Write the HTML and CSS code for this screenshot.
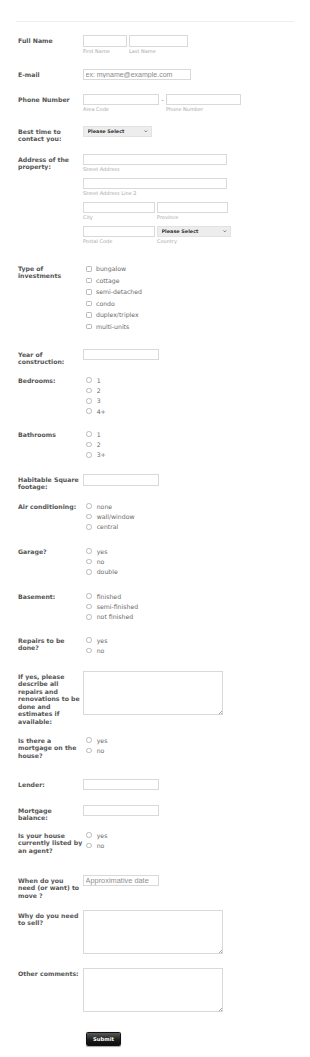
FILE: index.html
```html
<!DOCTYPE html>
<html lang="en">
<head>
<meta charset="utf-8">
<title>Property form</title>
<link rel="stylesheet" href="styles.css">
</head>
<body>
<div class="rule"></div>
<form class="form">
  <label class="lbl">Full Name</label>
  <div class="field pair">
    <div class="sub"><input class="in in-name w44" type="text"><span class="sl">First Name</span></div>
    <div class="sub"><input class="in in-name w59" type="text"><span class="sl">Last Name</span></div>
  </div>

  <label class="lbl">E-mail</label>
  <div class="field"><input class="in w108 ph-mail" type="email" placeholder="ex: myname@example.com"></div>

  <label class="lbl">Phone Number</label>
  <div class="field phone">
    <div class="sub"><input class="in w76" type="text"><span class="sl">Area Code</span></div>
    <span class="dash">-</span>
    <div class="sub"><input class="in w75" type="text"><span class="sl">Phone Number</span></div>
  </div>

  <label class="lbl">Best time to<br>contact you:</label>
  <div class="field">
    <span class="sel w69"><select><option>Please Select</option></select><svg class="chev" viewBox="0 0 6 4"><path d="M0.6 0.6 L3 3 L5.4 0.6" fill="none" stroke="#555" stroke-width="1.2"/></svg></span>
  </div>

  <label class="lbl">Address of the<br>property:</label>
  <div class="field addr">
    <div class="sub"><input class="in w144" type="text"><span class="sl">Street Address</span></div>
    <div class="sub"><input class="in w144" type="text"><span class="sl">Street Address Line 2</span></div>
    <div class="pair">
      <div class="sub"><input class="in w72" type="text"><span class="sl">City</span></div>
      <div class="sub"><input class="in w71" type="text"><span class="sl">Province</span></div>
    </div>
    <div class="pair">
      <div class="sub"><input class="in w72" type="text"><span class="sl">Postal Code</span></div>
      <div class="sub"><span class="sel w74"><select><option>Please Select</option></select><svg class="chev" viewBox="0 0 6 4"><path d="M0.6 0.6 L3 3 L5.4 0.6" fill="none" stroke="#555" stroke-width="1.2"/></svg></span><span class="sl">Country</span></div>
    </div>
  </div>

  <label class="lbl">Type of<br>investments</label>
  <div class="field opts chks">
    <label class="opt"><input type="checkbox">bungalow</label>
    <label class="opt"><input type="checkbox">cottage</label>
    <label class="opt"><input type="checkbox">semi-detached</label>
    <label class="opt"><input type="checkbox">condo</label>
    <label class="opt"><input type="checkbox">duplex/triplex</label>
    <label class="opt"><input type="checkbox">multi-units</label>
  </div>

  <label class="lbl">Year of<br>construction:</label>
  <div class="field"><input class="in w76" type="text"></div>

  <label class="lbl">Bedrooms:</label>
  <div class="field opts">
    <label class="opt"><input type="radio" name="bed">1</label>
    <label class="opt"><input type="radio" name="bed">2</label>
    <label class="opt"><input type="radio" name="bed">3</label>
    <label class="opt"><input type="radio" name="bed">4+</label>
  </div>

  <label class="lbl">Bathrooms</label>
  <div class="field opts">
    <label class="opt"><input type="radio" name="bath">1</label>
    <label class="opt"><input type="radio" name="bath">2</label>
    <label class="opt"><input type="radio" name="bath">3+</label>
  </div>

  <label class="lbl">Habitable Square<br>footage:</label>
  <div class="field"><input class="in w76 in-name" type="text"></div>

  <label class="lbl">Air conditioning:</label>
  <div class="field opts">
    <label class="opt"><input type="radio" name="air">none</label>
    <label class="opt"><input type="radio" name="air">wall/window</label>
    <label class="opt"><input type="radio" name="air">central</label>
  </div>

  <label class="lbl">Garage?</label>
  <div class="field opts">
    <label class="opt"><input type="radio" name="gar">yes</label>
    <label class="opt"><input type="radio" name="gar">no</label>
    <label class="opt"><input type="radio" name="gar">double</label>
  </div>

  <label class="lbl">Basement:</label>
  <div class="field opts">
    <label class="opt"><input type="radio" name="base">finished</label>
    <label class="opt"><input type="radio" name="base">semi-finished</label>
    <label class="opt"><input type="radio" name="base">not finished</label>
  </div>

  <label class="lbl">Repairs to be<br>done?</label>
  <div class="field opts">
    <label class="opt"><input type="radio" name="rep">yes</label>
    <label class="opt"><input type="radio" name="rep">no</label>
  </div>

  <label class="lbl">If yes, please<br>describe all<br>repairs and<br>renovations to be<br>done and<br>estimates if<br>available:</label>
  <div class="field"><span class="ta"><textarea></textarea></span></div>

  <label class="lbl">Is there a<br>mortgage on the<br>house?</label>
  <div class="field opts">
    <label class="opt"><input type="radio" name="mort">yes</label>
    <label class="opt"><input type="radio" name="mort">no</label>
  </div>

  <label class="lbl">Lender:</label>
  <div class="field"><input class="in w76" type="text"></div>

  <label class="lbl">Mortgage<br>balance:</label>
  <div class="field"><input class="in w76" type="text"></div>

  <label class="lbl">Is your house<br>currently listed by<br>an agent?</label>
  <div class="field opts">
    <label class="opt"><input type="radio" name="agent">yes</label>
    <label class="opt"><input type="radio" name="agent">no</label>
  </div>

  <label class="lbl">When do you<br>need (or want) to<br>move ?</label>
  <div class="field"><input class="in w76 ph-date" type="text" placeholder="Approximative date"></div>

  <label class="lbl">Why do you need<br>to sell?</label>
  <div class="field"><span class="ta"><textarea></textarea></span></div>

  <label class="lbl">Other comments:</label>
  <div class="field"><span class="ta"><textarea></textarea></span></div>

  <div class="field submit-cell"><button class="submit" type="button">Submit</button></div>
</form>
</body>
</html>
```

FILE: styles.css
```css
html, body {
  margin: 0;
  padding: 0;
  background: #fff;
}

body {
  font-family: "DejaVu Sans", Verdana, sans-serif;
  color: #555;
  width: 310px;
}

.rule {
  height: 0;
  border-top: 1px solid #eeeeee;
  margin: 21px 16px 13px 16px;
}

.form {
  display: grid;
  grid-template-columns: 65px 1fr;
  grid-template-rows: 34px 25px 32px 28px 109px 86px 26px 54px 45px 27px 45px 45px 44px 36px 64px 44px 26px 25px 45px 35px 58px 64px auto;
  margin: 0 0 0 18px;
  padding-bottom: 11px;
}

.lbl {
  font-weight: bold;
  font-size: 6.2px;
  line-height: 7.6px;
  padding-top: 1.5px;
  white-space: nowrap;
  color: #555;
}

.field {
  min-width: 0;
}

.pair {
  display: flex;
  gap: 2px;
}

.sub {
  display: flex;
  flex-direction: column;
  align-items: flex-start;
}

.sl {
  display: block;
  font-size: 5px;
  line-height: 7px;
  margin-top: 1px;
  color: #a8a8a8;
  white-space: nowrap;
}

.in {
  box-sizing: border-box;
  display: block;
  height: 11px;
  margin: 0;
  padding: 0 2px;
  border: 1px solid #d9d9d9;
  border-radius: 0;
  background: #fff;
  font-family: "Liberation Sans", Arial, sans-serif;
  font-size: 7px;
  color: #333;
  outline: none;
}

.in-name { height: 12px; }

.w44 { width: 44px; }
.w59 { width: 59px; }
.w69 { width: 69px; }
.w71 { width: 71px; }
.w72 { width: 72px; }
.w74 { width: 74px; }
.w75 { width: 75px; }
.w76 { width: 76px; }
.w108 { width: 108px; }
.w144 { width: 144px; }

.ph-mail {
  font-size: 7px;
  padding-left: 1.5px;
}
.ph-mail::placeholder { color: #8a8a8a; }

.ph-date {
  font-size: 7.4px;
  padding-left: 1.5px;
}
.ph-date::placeholder { color: #909090; }

.phone {
  display: flex;
  align-items: flex-start;
}

.dash {
  width: 7px;
  text-align: center;
  font-size: 6px;
  line-height: 11px;
  color: #666;
}

.addr {
  display: flex;
  flex-direction: column;
  gap: 5px;
}

.sel {
  position: relative;
  display: block;
  height: 11px;
}

.sel select {
  appearance: none;
  -webkit-appearance: none;
  display: block;
  box-sizing: border-box;
  width: 100%;
  height: 11px;
  margin: 0;
  padding: 0 0 0 3.5px;
  border: 1px solid #e2e2e2;
  border-radius: 0;
  background: #ededed;
  font-family: "DejaVu Sans", Verdana, sans-serif;
  font-weight: bold;
  font-size: 4.9px;
  line-height: 9px;
  color: #333;
  outline: none;
}

.chev {
  position: absolute;
  right: 4px;
  top: 4.2px;
  width: 3.6px;
  height: 2.6px;
}

.opts {
  display: flex;
  flex-direction: column;
  align-items: flex-start;
}

.opt {
  display: flex;
  align-items: center;
  height: 10.35px;
  font-size: 6.2px;
  color: #6b6b6b;
  white-space: nowrap;
}

.chks .opt { height: 11.5px; }

.opt input {
  appearance: none;
  -webkit-appearance: none;
  box-sizing: border-box;
  width: 5.5px;
  height: 5.5px;
  margin: 0 5.2px 0 3px;
  border: 1px solid #b9b9b9;
  border-radius: 50%;
  background: #fff;
  flex: none;
}

.chks .opt input {
  border-radius: 1.2px;
  margin-right: 4.5px;
}

.ta {
  position: relative;
  display: block;
  width: 140px;
  height: 44px;
}

.ta textarea {
  display: block;
  box-sizing: border-box;
  width: 140px;
  height: 44px;
  margin: 0;
  padding: 2px;
  border: 1px solid #d9d9d9;
  border-radius: 0;
  resize: none;
  outline: none;
  font-size: 6px;
}

.ta::after {
  content: "";
  position: absolute;
  right: 1.5px;
  bottom: 1.5px;
  width: 3px;
  height: 3px;
  background: linear-gradient(135deg, transparent 45%, #aaa 45%, #aaa 58%, transparent 58%, transparent 75%, #aaa 75%, #aaa 88%, transparent 88%);
}

.submit-cell {
  grid-column: 2;
}

.submit {
  display: block;
  box-sizing: border-box;
  width: 35px;
  height: 14px;
  margin: 0 0 0 3px;
  padding: 0;
  border: 1px solid #111;
  border-radius: 1.5px;
  background: linear-gradient(#5a5a5a, #1a1a1a 60%, #0d0d0d);
  box-shadow: 0 0.5px 1px rgba(0,0,0,0.35);
  font-family: "DejaVu Sans", Verdana, sans-serif;
  font-weight: bold;
  font-size: 5.2px;
  color: #fff;
  cursor: pointer;
}
```
